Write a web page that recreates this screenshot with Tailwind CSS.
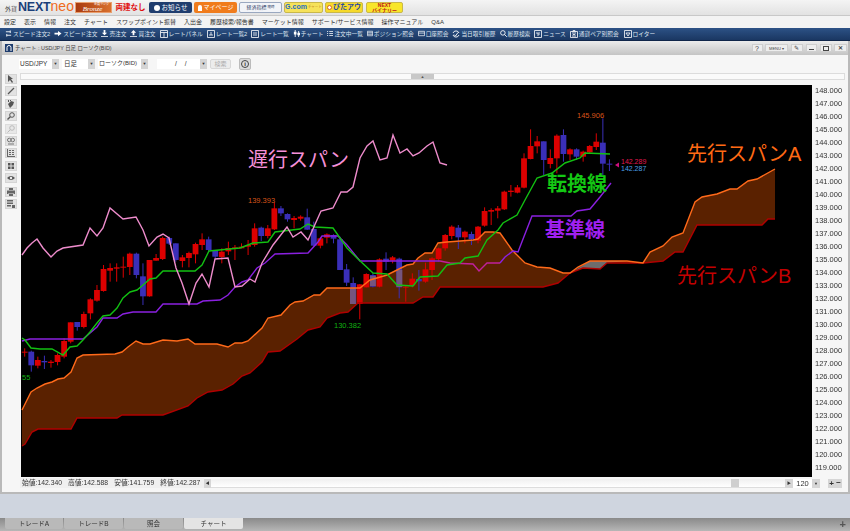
<!DOCTYPE html>
<html lang="ja">
<head>
<meta charset="UTF-8">
<title>外貨NEXTneo チャート</title>
<script src="https://cdn.jsdelivr.net/npm/@tailwindcss/browser@4"></script>
</head>
<body class="w-[850px] h-[531px] overflow-hidden flex flex-col bg-[#cfd5df] text-[#333] blur-[0.3px] font-['Liberation_Sans','Noto_Sans_CJK_JP',sans-serif]">

<!-- Header banners -->
<div class="h-[16px] shrink-0 flex items-center bg-linear-to-b from-[#f4f4f4] to-[#e2e2e2] border-b border-[#c8c8c8]">
  <div class="w-[75px] pl-[5px] flex items-baseline whitespace-nowrap">
    <span class="text-[6px] leading-[14px] text-[#444] mr-[1px]">外貨</span>
    <span class="text-[12.500px] leading-[14px] font-bold text-[#1b3f7a] tracking-[-0.2px]">NEXT</span>
    <span class="text-[14px] leading-[14px] text-[#ef6a1c]">neo</span>
  </div>
  <div class="w-[37px] h-[11px] bg-linear-to-r from-[#a83a10] to-[#d9712e] border border-[#e9a070] text-white flex flex-col items-end pr-[2px] whitespace-nowrap">
    <span class="text-[3px] leading-[3px]">会員ランク</span>
    <span class="w-full text-center text-[7px] leading-[6px] italic font-['Liberation_Serif',serif]">Bronze</span>
  </div>
  <div class="w-[37px] text-center text-[7.500px] font-bold text-[#e00d0d] whitespace-nowrap">両建なし</div>
  <div class="w-[43px] h-[11px] rounded-[2px] bg-[#1f3d6e] text-white text-[6.500px] flex items-center justify-center gap-[2px] whitespace-nowrap"><span class="w-[6px] h-[6px] rounded-full bg-white"></span>お知らせ</div>
  <div class="w-[43px] h-[11px] ml-[2px] rounded-[2px] bg-[#f07c1c] text-white text-[6px] flex items-center justify-center gap-[2px] whitespace-nowrap"><span class="w-[4px] h-[6px] rounded-t-full bg-white"></span>マイページ</div>
  <div class="w-[43px] h-[11px] ml-[2px] rounded-[2px] bg-[#f2f4f8] border border-[#9aa8c0] text-[#33456b] text-[5px] flex items-center justify-center whitespace-nowrap">経済指標 <span class="text-[3.500px] ml-[1px]">随時</span></div>
  <div class="w-[39px] h-[11px] ml-[2px] rounded-[2px] bg-[#f6e25a] border border-[#c9b84a] text-[#1f6fc0] text-[7px] font-bold flex items-center justify-center whitespace-nowrap">G.com<span class="text-[3.500px] font-normal text-[#c0831a] ml-[1px]">チャート</span></div>
  <div class="w-[38px] h-[11px] ml-[2px] rounded-[2px] bg-[#f6d92a] border border-[#c9b84a] text-[#1d47a8] text-[7px] font-bold flex items-center justify-center gap-[1px] whitespace-nowrap"><span class="w-[5px] h-[5px] rounded-full border border-[#d8602a] bg-white"></span>ぴたアウ</div>
  <div class="w-[37px] h-[11px] ml-[3px] rounded-[2px] bg-[#f8e62a] border border-[#c9b84a] text-[#c01818] text-[5px] font-bold flex flex-col items-center justify-center leading-[5px] whitespace-nowrap"><span>NEXT</span><span>バイナリー</span></div>
</div>

<!-- Menu -->
<div class="h-[12px] shrink-0 flex items-center gap-[8px] pl-[4px] bg-[#f3f3f3] text-[6px] text-[#333] whitespace-nowrap">
  <span>設定</span><span>表示</span><span>情報</span><span>注文</span><span>チャート</span><span>スワップポイント振替</span><span>入出金</span><span>履歴検索/報告書</span><span>マーケット情報</span><span>サポート/サービス情報</span><span>操作マニュアル</span><span>Q&amp;A</span>
</div>

<!-- Toolbar -->
<div class="h-[13px] shrink-0 flex items-center gap-[4px] pl-[5px] bg-linear-to-b from-[#2d5286] to-[#1a3762] border-b border-[#10264a] text-[5.700px] text-[#dfe6f0] whitespace-nowrap">
  <span class="flex items-center gap-[1px]"><svg class="w-[7px] h-[7px]" viewBox="0 0 8 8" fill="none" stroke="#fff"><path d="M1 2h5M6 0.5v3M7 6H2M2 4.500v3"/></svg>スピード注文2</span>
  <span class="flex items-center gap-[1px]"><svg class="w-[8px] h-[7px]" viewBox="0 0 8 8" fill="#fff"><path d="M0 3h4V1l4 3-4 3V5H0z"/></svg>スピード注文</span>
  <span class="flex items-center gap-[1px]"><svg class="w-[7px] h-[7px]" viewBox="0 0 8 8" fill="#fff"><path d="M3 0h2v3h2L4 6 1 3h2zM0 7h8v1H0z"/></svg>売注文</span>
  <span class="flex items-center gap-[1px]"><svg class="w-[7px] h-[7px]" viewBox="0 0 8 8" fill="#fff"><path d="M3 6h2V3h2L4 0 1 3h2zM0 7h8v1H0z"/></svg>買注文</span>
  <span class="flex items-center gap-[1px]"><svg class="w-[8px] h-[8px]" viewBox="0 0 8 8" fill="none" stroke="#fff" stroke-width=".8"><path d="M.5.500h7v7h-7zM.5 2.500h7M4 2.500v5"/></svg>レートパネル</span>
  <span class="flex items-center gap-[1px]"><svg class="w-[8px] h-[8px]" viewBox="0 0 8 8" fill="none" stroke="#fff" stroke-width=".8"><path d="M.5.500h7v7h-7zM2 5h4M4 2v3"/></svg>レート一覧2</span>
  <span class="flex items-center gap-[1px]"><svg class="w-[8px] h-[8px]" viewBox="0 0 8 8" fill="none" stroke="#fff" stroke-width=".8"><path d="M.5.500h7v7h-7zM2 3h4M2 5h4"/></svg>レート一覧</span>
  <span class="flex items-center gap-[1px]"><svg class="w-[7px] h-[7px]" viewBox="0 0 8 8" fill="#fff"><path d="M2 0h1v8H2zM1 2h3v3H1zM6 1h1v7H6zM5 3h3v3H5z"/></svg>チャート</span>
  <span class="flex items-center gap-[1px]"><svg class="w-[6px] h-[7px]" viewBox="0 0 8 8" fill="#fff"><path d="M0 1h1.500v1H0zM3 1h5v1H3zM0 3.500h1.500v1H0zM3 3.500h5v1H3zM0 6h1.500v1H0zM3 6h5v1H3z"/></svg>注文中一覧</span>
  <span class="flex items-center gap-[1px]"><svg class="w-[6px] h-[7px]" viewBox="0 0 8 8" fill="none" stroke="#fff" stroke-width=".9"><path d="M.5 1h7v6h-7zM.5 3h7M.5 5h7"/></svg>ポジション照会</span>
  <span class="flex items-center gap-[1px]"><svg class="w-[7px] h-[7px]" viewBox="0 0 8 8" fill="none" stroke="#fff" stroke-width=".8"><path d="M.5 1.500h7v5h-7zM.5 3.500h7"/></svg>口座照会</span>
  <span class="flex items-center gap-[1px]"><svg class="w-[8px] h-[8px]" viewBox="0 0 8 8" fill="none" stroke="#fff" stroke-width=".9"><path d="M1 3a3.200 3.200 0 0 1 6 0M7 5a3.200 3.200 0 0 1-6 0M2 4.500l1.500 1.500L6 2.500"/></svg>当日取引履歴</span>
  <span class="flex items-center gap-[1px]"><svg class="w-[7px] h-[7px]" viewBox="0 0 8 8" fill="none" stroke="#fff"><circle cx="3.300" cy="3.300" r="2.600"/><path d="M5.200 5.200L7.800 7.800"/></svg>履歴検索</span>
  <span class="flex items-center gap-[1px]"><svg class="w-[8px] h-[8px]" viewBox="0 0 8 8" fill="none" stroke="#fff" stroke-width=".8"><path d="M.5.500h7v7h-7zM2 3h2v3M5 2v3"/></svg>ニュース</span>
  <span class="flex items-center gap-[1px]"><svg class="w-[8px] h-[8px]" viewBox="0 0 8 8" fill="none" stroke="#fff" stroke-width=".8"><path d="M.5 1.500h7v6h-7zM3 .5h2v4H3zM2 6h4"/></svg>通貨ペア別照会</span>
  <span class="flex items-center gap-[1px] ml-[1px]"><svg class="w-[8px] h-[8px]" viewBox="0 0 8 8" fill="none" stroke="#fff" stroke-width=".8"><path d="M.5.500h7v7h-7zM2 3h4L4 6z"/></svg>ロイター</span>
</div>

<!-- Chart window -->
<div class="h-[453px] shrink-0 flex flex-col bg-[#f6f6f6] border-l-[2px] border-r-[2px] border-b-[2px] border-[#b9b9b9]">
  <div class="h-[14px] shrink-0 flex items-center pl-[3px] pr-[1px] bg-linear-to-b from-[#ececec] to-[#c4c4c4]">
    <svg class="w-[8px] h-[8px] mr-[2px]" viewBox="0 0 8 8"><path fill="#1f3d6e" d="M0 0h8v8H0z"/><path fill="none" stroke="#fff" d="M2 7V3.500a2 2 0 0 1 4 0V7"/></svg>
    <span class="text-[5.400px] text-[#444]">チャート : USD/JPY 日足 ローソク(BID)</span>
    <div class="ml-auto flex items-center gap-[2.500px] text-[#444]">
      <span class="w-[11px] h-[8px] bg-[#ededed] border border-[#cfcfcf] text-[7px] leading-[7px] text-center">?</span>
      <span class="w-[23px] h-[8px] bg-[#ededed] border border-[#cfcfcf] text-[4px] leading-[7px] text-center">MENU ▾</span>
      <span class="w-[12px] h-[8px] bg-[#ededed] border border-[#cfcfcf] text-[6px] leading-[7px] text-center mr-[1px]">✎</span>
      <span class="w-[11px] h-[8px] bg-[#ededed] border border-[#cfcfcf] flex items-end justify-center pb-[1px]"><span class="w-[5px] h-[1px] bg-[#444]"></span></span>
      <span class="w-[12px] h-[8px] bg-[#ededed] border border-[#cfcfcf] flex items-center justify-center"><span class="w-[6px] h-[5px] border border-[#444]"></span></span>
      <span class="w-[13px] h-[8px] bg-[#ededed] border border-[#cfcfcf] text-[6px] leading-[7px] text-center font-bold">✕</span>
    </div>
  </div>

  <!-- Symbol and date controls -->
  <div class="h-[17px] shrink-0 flex items-center pl-[17px] text-[6.500px] text-[#333] whitespace-nowrap">
    <div class="w-[40px] h-[10px] flex items-center justify-between bg-white pl-[1px]">USD/JPY<span class="w-[7px] h-[10px] bg-[#d4d4d4] text-[4px] leading-[10px] text-center">▼</span></div>
    <div class="w-[33px] h-[10px] ml-[3px] flex items-center justify-between bg-white pl-[2px]">日足<span class="w-[7px] h-[10px] bg-[#d4d4d4] text-[4px] leading-[10px] text-center">▼</span></div>
    <div class="w-[50px] h-[10px] ml-[3px] flex items-center justify-between bg-white pl-[1px] text-[6px]">ローソク(BID)<span class="w-[7px] h-[10px] bg-[#d4d4d4] text-[4px] leading-[10px] text-center">▼</span></div>
    <div class="w-[50px] h-[10px] ml-[9px] flex items-center justify-between bg-white"><span class="pl-[18px] tracking-[8px]">//</span><span class="w-[7px] h-[10px] bg-[#d4d4d4] text-[4px] leading-[10px] text-center">▼</span></div>
    <div class="w-[21px] h-[10px] ml-[3px] rounded-[2px] bg-[#ececec] border border-[#d8d8d8] text-[#aaa] text-[6px] text-center leading-[8px]">検索</div>
    <div class="w-[12px] h-[12px] ml-[8px] rounded-[2px] bg-[#dcdcdc] border border-[#bbb] flex items-center justify-center"><span class="w-[8px] h-[8px] rounded-full border border-[#444] text-[6px] leading-[6px] text-center font-bold">i</span></div>
  </div>

  <div class="flex-1 flex min-h-0">
    <!-- Drawing tools -->
    <div class="w-[18px] shrink-0 flex flex-col gap-[2.400px] pl-[3px] pt-[2px]">
      <span class="w-[12px] h-[10px] bg-[#e2e2e2] border border-[#d4d4d4] flex items-center justify-center"><svg class="w-[8px] h-[8px]" viewBox="0 0 8 8" fill="#555"><path d="M1 0l5 4H4l2 3-1 1-2-3-2 2z"/></svg></span>
      <span class="w-[12px] h-[10px] bg-[#e2e2e2] border border-[#d4d4d4] flex items-center justify-center"><svg class="w-[8px] h-[8px]" viewBox="0 0 8 8" stroke="#555" stroke-width="1.300"><path d="M1 7L7 1"/></svg></span>
      <span class="w-[12px] h-[10px] bg-[#e2e2e2] border border-[#d4d4d4] flex items-center justify-center"><svg class="w-[8px] h-[8px]" viewBox="0 0 8 8" fill="#555"><path d="M1 4l3-3 3 1-1 3-3 3zM1 0h1v2H1zM3 0h1v1H3z"/></svg></span>
      <span class="w-[12px] h-[10px] bg-[#e2e2e2] border border-[#d4d4d4] flex items-center justify-center"><svg class="w-[8px] h-[8px]" viewBox="0 0 8 8" fill="none" stroke="#555"><circle cx="5" cy="3" r="2.300"/><path d="M3.300 4.700L.5 7.500" stroke-width="1.400"/></svg></span>
      <span class="w-[12px] h-[10px] bg-[#e8e8e8] border border-[#dcdcdc] flex items-center justify-center"><svg class="w-[8px] h-[8px]" viewBox="0 0 8 8" fill="none" stroke="#bbb"><circle cx="5" cy="3" r="2.300"/><path d="M3.300 4.700L.5 7.500"/></svg></span>
      <span class="w-[12px] h-[10px] bg-[#e2e2e2] border border-[#d4d4d4] flex items-center justify-center"><svg class="w-[8px] h-[8px]" viewBox="0 0 8 8" fill="none" stroke="#777"><circle cx="2.300" cy="3" r="1.800"/><circle cx="5.700" cy="3" r="1.800"/><path d="M1 7h6"/></svg></span>
      <span class="w-[12px] h-[10px] bg-[#e2e2e2] border border-[#d4d4d4] flex items-center justify-center"><svg class="w-[8px] h-[8px]" viewBox="0 0 8 8" fill="#666"><path d="M0 0h1v8H0zM0 7h8v1H0zM2 1h2v1H2zM5 1h2v1H5zM2 3h2v1H2zM5 3h2v1H5zM2 5h2v1H2zM5 5h2v1H5z"/></svg></span>
      <span class="w-[12px] h-[10px] bg-[#e2e2e2] border border-[#d4d4d4] flex items-center justify-center"><svg class="w-[8px] h-[8px]" viewBox="0 0 8 8" fill="#555"><path d="M1 1h2.500v2.500H1zM4.500 1H7v2.500H4.500zM1 4.500h2.500V7H1zM4.500 4.500H7V7H4.500z"/></svg></span>
      <span class="w-[12px] h-[10px] bg-[#e2e2e2] border border-[#d4d4d4] flex items-center justify-center"><svg class="w-[8px] h-[8px]" viewBox="0 0 8 8"><path fill="#555" d="M0 4q4-4 8 0-4 4-8 0z"/><circle cx="4" cy="4" r="1.200" fill="#eee"/></svg></span>
      <span class="w-[12px] h-[10px] bg-[#e2e2e2] border border-[#d4d4d4] flex items-center justify-center mt-[1px]"><svg class="w-[8px] h-[8px]" viewBox="0 0 8 8" fill="#666"><path d="M2 0h4v2H2zM0 2.500h8V6H6.500V5h-5v1H0zM2 5.500h4V8H2z"/></svg></span>
      <span class="w-[12px] h-[10px] bg-[#e2e2e2] border border-[#d4d4d4] flex items-center justify-center"><svg class="w-[8px] h-[8px]" viewBox="0 0 8 8" fill="#666"><path d="M0 0h6v1.500H0zM0 2.500h6V4H0zM0 5h4v1.500H0zM5 5h3v3H5z"/></svg></span>
    </div>

    <div class="flex-1 flex flex-col min-w-0">
      <!-- Range ruler -->
      <div class="w-[825px] h-[7px] mt-[1px] shrink-0 flex bg-[#fafafa] border border-[#dcdcdc]"><span class="w-[23px] ml-[390px] bg-[#c8c8c8] text-[4px] leading-[5px] text-center text-[#555]">▲</span></div>

      <div class="flex mt-[5px] shrink-0">
        <!-- Chart -->
        <div class="w-[791px] h-[392px] shrink-0 ml-[1px] bg-black">
          <svg id="chart" width="791" height="392" viewBox="21 85 791 392" class="block font-['Liberation_Sans','Noto_Sans_CJK_JP',sans-serif]"></svg>
        </div>
        <!-- Price axis -->
        <div id="axis" class="w-[33px] pl-[3px] -mt-[1px] text-[7.500px] leading-[13px] text-[#333]"></div>
      </div>

      <!-- OHLC status and scrollbar -->
      <div class="h-[10px] mt-[1px] shrink-0 flex items-center text-[6.800px] text-[#333] whitespace-nowrap">
        <div class="w-[184px] shrink-0 pl-[2px] flex gap-[6px] bg-[#f0f0f0]"><span>始値:142.340</span><span>高値:142.588</span><span>安値:141.759</span><span>終値:142.287</span></div>
        <span class="w-[7px] h-[9px] bg-[#d6d6d6] text-[4px] leading-[9px] text-center">◀</span>
        <div class="w-[574px] h-[9px] flex justify-end pr-[46px] bg-linear-to-b from-[#f0f0f0] to-white border-b border-[#ddd]"><span class="w-[8px] bg-[#cfcfcf]"></span></div>
        <span class="w-[8px] h-[9px] bg-[#d6d6d6] text-[4px] leading-[9px] text-center">▶</span>
        <span class="w-[19px] h-[9px] bg-white text-[7.500px] leading-[9px] text-center">120</span>
        <span class="w-[8px] h-[9px] bg-[#d6d6d6] text-[4px] leading-[9px] text-center">▼</span>
        <span class="w-[8px] h-[9px] bg-[#f6f6f6]"></span>
        <span class="w-[7px] h-[9px] bg-[#d6d6d6] text-[8px] leading-[9px] text-center font-bold">+</span>
        <span class="w-[7px] h-[9px] bg-[#d6d6d6] text-[8px] leading-[8px] text-center font-bold">−</span>
      </div>
    </div>
  </div>
</div>

<!-- Bottom tabs -->
<div class="h-[13px] mt-[24px] shrink-0 flex items-stretch pl-[5px] gap-[1px] bg-linear-to-b from-[#8a8a8a] to-[#b6b6b6] text-[6.500px] text-[#333]">
  <span class="w-[58px] mb-[2px] rounded-b-[2px] bg-[#b9b9b9] text-center leading-[11px]">トレードA</span>
  <span class="w-[59px] mb-[2px] rounded-b-[2px] bg-[#b9b9b9] text-center leading-[11px]">トレードB</span>
  <span class="w-[59px] mb-[2px] rounded-b-[2px] bg-[#b9b9b9] text-center leading-[11px]">照会</span>
  <span class="w-[59px] mb-[2px] rounded-b-[2px] bg-[#e4e4e4] text-center leading-[11px]">チャート</span>
  <span class="ml-auto mr-[4px] text-[11px] leading-[13px] font-bold text-[#555]">+</span>
</div>

<script>
  // price axis
  const axis = document.getElementById("axis");
  for (let p = 148; p >= 119; p--) {
    const row = document.createElement("div");
    row.textContent = p + ".000";
    axis.appendChild(row);
  }

  // ichimoku lines, page coordinates
  const spanA = [[22,410],[25,404],[31,392],[37,388],[45,384],[52,382],[58,379],[64,378],[71,372],[77,358],[83,355],[115,354],[122,352],[128,347],[136,341],[143,344],[150,344],[163,340],[177,341],[188,339],[195,344],[217,344],[228,347],[235,343],[242,343],[248,341],[262,328],[268,318],[281,315],[290,305],[295,302],[303,301],[314,295],[320,295],[327,288],[360,288],[370,280],[387,275],[397,270],[407,265],[413,264],[418,258],[425,253],[432,253],[438,243],[447,242],[473,240],[478,239],[485,232],[493,232],[500,233],[505,240],[512,250],[525,263],[537,267],[550,268],[563,273],[570,273],[578,267],[590,261],[627,261],[643,263],[650,252],[663,246],[672,237],[683,233],[695,202],[702,197],[717,194],[730,189],[737,189],[748,181],[757,179],[775,169]];
  const spanB = [[22,446],[25,444],[32,432],[38,429],[71,429],[77,418],[117,418],[122,415],[163,415],[188,406],[197,398],[208,392],[222,390],[233,384],[242,376],[250,373],[262,362],[268,352],[280,351],[297,339],[308,330],[320,327],[327,318],[340,313],[348,312],[358,303],[413,303],[423,297],[433,297],[440,287],[543,287],[558,283],[570,273],[583,268],[600,269],[607,263],[643,263],[663,261],[675,252],[683,252],[697,225],[762,225],[768,219],[775,219]];
  const tenkan = [[22,338],[25,340],[31,348],[40,349],[52,349],[63,355],[70,347],[77,346],[83,340],[90,332],[97,323],[103,316],[110,315],[117,308],[123,298],[130,292],[137,290],[143,285],[150,279],[156,278],[163,271],[195,271],[202,265],[209,251],[240,248],[253,243],[268,242],[275,232],[300,229],[308,224],[315,227],[333,228],[347,248],[357,258],[373,273],[387,274],[397,285],[413,286],[420,277],[438,276],[447,265],[460,263],[465,258],[478,256],[487,240],[498,230],[503,223],[517,215],[525,200],[537,178],[552,173],[565,163],[580,158],[585,153],[610,154]];
  const kijun = [[22,341],[30,339],[83,339],[97,327],[103,318],[117,318],[123,314],[133,312],[156,312],[163,304],[197,304],[203,301],[220,300],[228,295],[235,287],[242,282],[248,280],[257,268],[265,263],[275,254],[308,253],[318,242],[322,236],[338,236],[347,245],[360,261],[440,261]];
  const kijunInCloud = [[440,261],[450,263],[473,264],[479,271],[487,263],[500,263]];
  const kijunEnd = [[500,263],[505,257],[513,251],[518,252],[532,216],[571,216],[577,211],[590,209],[600,197],[611,183]];
  const chikou = [[22,255],[27,248],[32,243],[37,239],[43,248],[51,257],[57,251],[63,248],[83,245],[90,228],[97,236],[103,228],[110,208],[123,219],[136,217],[143,230],[149,246],[157,237],[163,234],[169,238],[176,268],[182,283],[189,304],[196,283],[202,274],[209,287],[215,259],[228,258],[235,287],[242,286],[250,279],[255,282],[262,263],[273,245],[287,227],[293,237],[301,232],[308,240],[321,211],[333,208],[341,192],[347,192],[353,187],[360,158],[367,146],[373,141],[380,160],[387,158],[393,135],[400,153],[407,149],[413,156],[419,153],[427,146],[433,142],[440,163],[447,165]];

  // candles: colour, body top, body bottom, wick top, wick bottom (zoomed 3x from y0)
  const candles = [
    ["r",515,518,505,530],["b",515,556,512,575],["r",540,557,530,565],["b",543,547,527,567],["r",545,549,540,563],["r",525,546,520,556],["r",483,530,475,535],["r",427,485,427,490],["b",426,441,426,452],["r",402,441,395,445],
    ["r",358,400,355,418],["r",330,362,315,365],["r",267,333,255,335],["r",264,272,250,305],["r",262,266,250,305],["r",260,263,230,293],["r",221,261,218,285],["b",221,285,218,295],["b",289,349,250,375],["r",240,349,240,350],
    ["r",234,242,222,242],["r",174,237,170,240],["b",174,191,170,195],["b",190,240,190,245],["r",232,243,225,262],["r",219,234,215,262],["r",192,223,188,250],["r",178,195,160,210],["b",178,210,170,215],["b",210,230,210,235],
    ["r",215,231,205,250],["r",204,214,185,225],["r",202,207,195,240],["r",200,205,190,205],["r",195,200,180,225],["r",145,195,130,200],
    ["b",143,168,140,183],["r",145,168,135,175],["r",85,148,68,150],["b",85,100,78,108],["b",102,118,100,125],["r",114,120,108,145],["r",110,116,106,122],["b",112,149,86,150],["b",147,197,125,200],["r",175,197,172,205],
    ["r",163,173,160,190],["b",165,176,163,190],["b",178,270,170,270],["b",268,308,252,318],["b",309,372,292,372],["r",313,372,312,418],["r",282,322,280,322],["b",285,320,280,322],["r",238,320,235,322],["b",236,245,217,270],
    ["r",232,242,228,250],["b",236,322,233,355],["r",320,322,318,365],["r",296,316,280,322],["b",297,304,270,332],["r",268,305,248,308],["r",235,270,232,300],["r",205,237,203,245],["r",165,205,162,212],["r",140,168,136,178],
    ["b",143,172,135,207],["r",155,172,152,190],["b",162,178,155,195],["r",140,182,138,190],["r",93,137,82,140],["r",90,95,85,135],["r",85,92,78,115],
    // from here on the values were read against y0 = 100
    ["r",275,328,272,330,1],["r",272,276,255,290,1],["r",262,278,255,280,1],["r",175,263,160,265,1],["r",138,177,88,178,1],["r",124,139,108,160,1],["b",124,180,124,225,1],["r",174,192,148,205,1],["r",107,175,103,220,1],["b",105,162,88,185,1],
    ["r",148,163,145,180,1],["b",148,170,145,180,1],["r",155,170,152,185,1],["r",138,157,135,160,1],["r",125,141,100,150,1],["b",128,191,55,225,1],["b",191,194,178,213,1]
  ];

  const pts = a => a.map(p => p.join(",")).join(" ");
  const line = (a, color, w) => `<polyline points="${pts(a)}" fill="none" stroke="${color}" stroke-width="${w}"/>`;
  let svg = `<polygon points="${pts(spanA.concat([...spanB].reverse()))}" fill="#5a2100"/>`;
  svg += `<polygon points="572,272 590,261 627,261 607,263 600,269 583,268" fill="#6d6d6d"/>`;

  candles.forEach((c, i) => {
    const y0 = c[5] ? 100 : 180;
    const x = 24.7 + i * 6.57;
    const color = c[0] == "r" ? "#dc0000" : "#3a2fb8";
    svg += `<line x1="${x}" x2="${x}" y1="${y0 + c[3] / 3}" y2="${y0 + c[4] / 3}" stroke="${color}"/>`;
    svg += `<rect x="${x - 2.9}" y="${y0 + c[1] / 3}" width="5.8" height="${Math.max((c[2] - c[1]) / 3, 1)}" fill="${color}"/>`;
  });
  // blue bodies show grey where they sit in the cloud
  svg += `<rect x="350" y="288" width="5.8" height="16" fill="#75557e"/><rect x="370" y="276" width="5.8" height="10" fill="#75557e"/><rect x="396.500" y="270" width="5.8" height="17" fill="#75557e"/>`;

  svg += line(spanB, "#b00000", 1.4) + line(spanA, "#ff6a1a", 1.4);
  svg += line(kijun, "#8a20e0", 1.4) + line(kijunInCloud, "#c0209c", 1.4) + line(kijunEnd, "#8a20e0", 1.4);
  svg += line(tenkan, "#12c012", 1.4) + line(chikou, "#ee8ccc", 1.4);

  const text = (x, y, s, size, color, bold) => `<text x="${x}" y="${y}" font-size="${size}" fill="${color}"${bold ? ' font-weight="bold"' : ""}>${s}</text>`;
  svg += text(248, 167, "遅行スパン", 20, "#f590d8");
  svg += text(687, 161, "先行スパンA", 20, "#ff6a14");
  svg += text(547, 191, "転換線", 20, "#14c814", true);
  svg += text(545, 237, "基準線", 20, "#a020f0", true);
  svg += text(677, 283, "先行スパンB", 20, "#c40000");
  svg += text(577, 118, "145.906", 7.5, "#d8551a");
  svg += text(248, 203, "139.393", 7.5, "#d8551a");
  svg += text(334, 328, "130.382", 7.5, "#12b012");
  svg += text(22, 380, "55", 7.5, "#12b012");
  svg += text(621, 163.5, "142.289", 7, "#e01850");
  svg += text(621, 170.5, "142.287", 7, "#4aa0e8");
  svg += `<path d="M615 165l4-2.500v5z" fill="#d01080"/>`;

  document.getElementById("chart").innerHTML = svg;
</script>
</body>
</html>
